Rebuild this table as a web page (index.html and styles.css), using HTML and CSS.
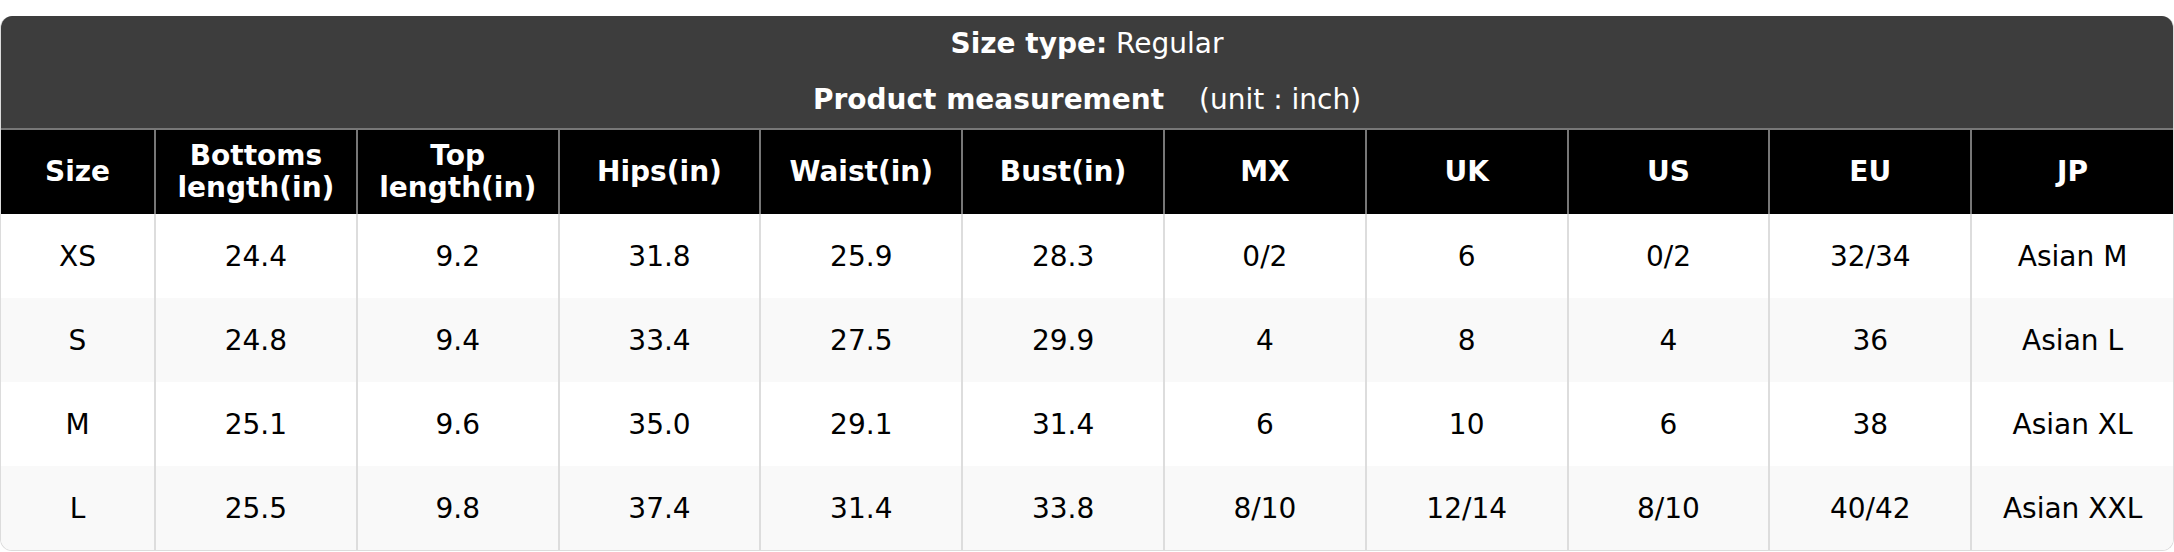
FILE: index.html
```html
<!DOCTYPE html>
<html>
<head>
<meta charset="utf-8">
<link rel="stylesheet" href="styles.css">
</head>
<body>
<div class="page">
  <div class="chart">
    <div class="title">
      <div class="title-line"><b>Size type:</b> Regular</div>
      <div class="title-line"><b>Product measurement</b><span class="unit">(unit : inch)</span></div>
    </div>
    <table class="sizes">
      <colgroup>
        <col class="col-size">
        <col><col><col><col><col><col><col><col><col><col>
      </colgroup>
      <thead>
        <tr class="head-row">
          <th>Size</th>
          <th>Bottoms<br>length(in)</th>
          <th>Top<br>length(in)</th>
          <th>Hips(in)</th>
          <th>Waist(in)</th>
          <th>Bust(in)</th>
          <th>MX</th>
          <th>UK</th>
          <th>US</th>
          <th>EU</th>
          <th>JP</th>
        </tr>
      </thead>
      <tbody>
        <tr>
          <td>XS</td><td>24.4</td><td>9.2</td><td>31.8</td><td>25.9</td><td>28.3</td><td>0/2</td><td>6</td><td>0/2</td><td>32/34</td><td>Asian M</td>
        </tr>
        <tr>
          <td>S</td><td>24.8</td><td>9.4</td><td>33.4</td><td>27.5</td><td>29.9</td><td>4</td><td>8</td><td>4</td><td>36</td><td>Asian L</td>
        </tr>
        <tr>
          <td>M</td><td>25.1</td><td>9.6</td><td>35.0</td><td>29.1</td><td>31.4</td><td>6</td><td>10</td><td>6</td><td>38</td><td>Asian XL</td>
        </tr>
        <tr>
          <td>L</td><td>25.5</td><td>9.8</td><td>37.4</td><td>31.4</td><td>33.8</td><td>8/10</td><td>12/14</td><td>8/10</td><td>40/42</td><td>Asian XXL</td>
        </tr>
      </tbody>
    </table>
  </div>
</div>
</body>
</html>
```

FILE: styles.css
```css
html, body {
  margin: 0;
  padding: 0;
  background: #ffffff;
}

body {
  font-family: "DejaVu Sans", "Liberation Sans", sans-serif;
  font-size: 28px;
  color: #000;
}

.page {
  padding-top: 16px;
}

.chart {
  width: 2174px;
  box-sizing: border-box;
  border: 1px solid #dcdcdc;
  border-top: none;
  border-radius: 12px;
  overflow: hidden;
  background: #fff;
}

.title {
  background: #3d3d3d;
  color: #fff;
  text-align: center;
  padding: 11px 0 12px;
  display: flex;
  flex-direction: column;
  gap: 23px;
}

.title-line {
  line-height: 33px;
  font-size: 28px;
}

.unit {
  margin-left: 35px;
}

.sizes {
  width: 100%;
  border-collapse: collapse;
  table-layout: fixed;
}

.col-size {
  width: 154px;
}

.sizes th {
  background: #000;
  color: #fff;
  font-weight: bold;
  font-size: 28px;
  line-height: 32px;
  padding: 0 4px;
  border-left: 2px solid #777;
  border-right: 2px solid #777;
  border-top: 2px solid #777;
  text-align: center;
  vertical-align: middle;
}

.head-row {
  height: 85px;
}

.sizes td {
  height: 84px;
  padding: 0 4px;
  text-align: center;
  vertical-align: middle;
  line-height: 33px;
  border-left: 2px solid #dddddd;
  border-right: 2px solid #dddddd;
}

.sizes th:first-child,
.sizes td:first-child {
  border-left: none;
}

.sizes th:last-child,
.sizes td:last-child {
  border-right: none;
}

.sizes tbody tr:nth-child(even) td {
  background: #f9f9f9;
}
```
